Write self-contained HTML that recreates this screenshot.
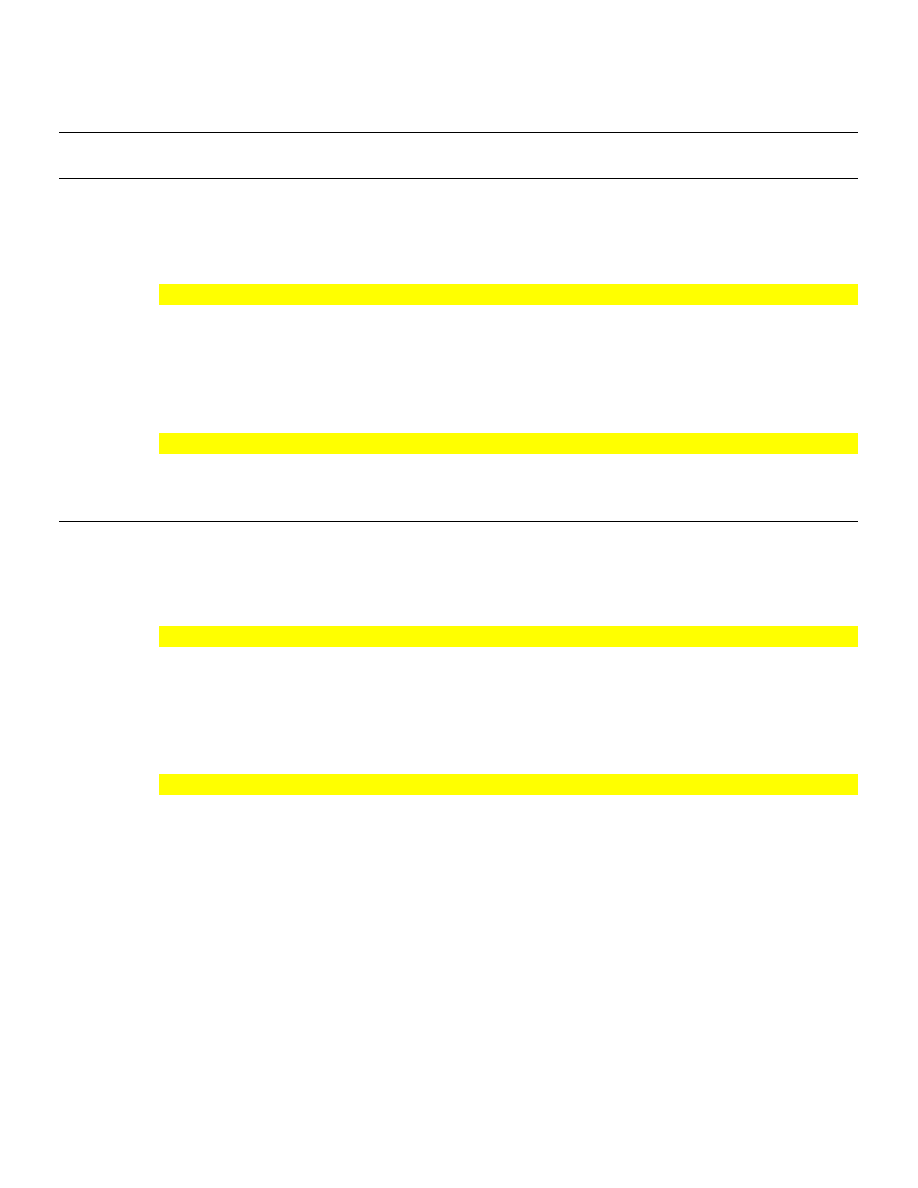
<!DOCTYPE html>
<html><head><style>
body{margin:0;width:918px;height:1188px;background:#fff;position:relative;overflow:hidden}
.l{position:absolute;left:59px;width:799px;height:1px;background:#000}
.y{position:absolute;left:159px;width:699px;height:21px;background:#ff0}
</style></head><body>
<div class="l" style="top:132px"></div>
<div class="l" style="top:178px"></div>
<div class="y" style="top:284px"></div>
<div class="y" style="top:433px"></div>
<div class="l" style="top:521px"></div>
<div class="y" style="top:626px"></div>
<div class="y" style="top:774px"></div>
</body></html>
